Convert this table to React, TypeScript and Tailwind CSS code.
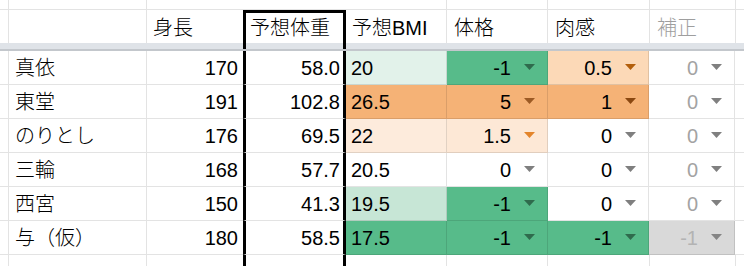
type Chip = { v: string; bg: string; text: string; arrow: string };

type Row = {
  name: string;
  height: string;
  weight: string;
  bmi: string;
  bmiBg: string;
  body: Chip;
  meat: Chip;
  fix: Chip;
};

const white = (v: string): Chip => ({ v, bg: "bg-white", text: "text-black", arrow: "fill-[#7f7f7f]" });
const green = (v: string): Chip => ({ v, bg: "bg-[#57bb8a]", text: "text-black", arrow: "fill-[#2f6b4d]" });
const grayFix = (v: string): Chip => ({ v, bg: "bg-white", text: "text-[#a3a3a3]", arrow: "fill-[#808080]" });

const rows: Row[] = [
  {
    name: "真依",
    height: "170",
    weight: "58.0",
    bmi: "20",
    bmiBg: "bg-[#e2f2ea]",
    body: green("-1"),
    meat: { v: "0.5", bg: "bg-[#fcd9b7]", text: "text-black", arrow: "fill-[#b35f0c]" },
    fix: grayFix("0"),
  },
  {
    name: "東堂",
    height: "191",
    weight: "102.8",
    bmi: "26.5",
    bmiBg: "bg-[#f5b276]",
    body: { v: "5", bg: "bg-[#f5b276]", text: "text-black", arrow: "fill-[#9c5a24]" },
    meat: { v: "1", bg: "bg-[#f5b276]", text: "text-black", arrow: "fill-[#8a4710]" },
    fix: grayFix("0"),
  },
  {
    name: "のりとし",
    height: "176",
    weight: "69.5",
    bmi: "22",
    bmiBg: "bg-[#fdebdc]",
    body: { v: "1.5", bg: "bg-[#fde8d6]", text: "text-black", arrow: "fill-[#e3852c]" },
    meat: white("0"),
    fix: grayFix("0"),
  },
  {
    name: "三輪",
    height: "168",
    weight: "57.7",
    bmi: "20.5",
    bmiBg: "bg-white",
    body: white("0"),
    meat: white("0"),
    fix: grayFix("0"),
  },
  {
    name: "西宮",
    height: "150",
    weight: "41.3",
    bmi: "19.5",
    bmiBg: "bg-[#c7e6d6]",
    body: green("-1"),
    meat: white("0"),
    fix: grayFix("0"),
  },
  {
    name: "与（仮）",
    height: "180",
    weight: "58.5",
    bmi: "17.5",
    bmiBg: "bg-[#57bb8a]",
    body: green("-1"),
    meat: green("-1"),
    fix: { v: "-1", bg: "bg-[#d9d9d9]", text: "text-[#b3b3b3]", arrow: "fill-[#858585]" },
  },
];

const grid = "border-r border-b border-black/[0.11]";
const thick = "border-x-[3px] border-x-black border-b border-b-black/[0.11]";

function Arrow({ className }: { className: string }) {
  return (
    <svg width="11" height="6" viewBox="0 0 11 6" className="ml-[13px] mb-[1px] shrink-0">
      <polygon points="0,0 11,0 5.5,6" className={className} />
    </svg>
  );
}

function ChipCell({ chip, width }: { chip: Chip; width: string }) {
  return (
    <div className={`${width} ${grid} ${chip.bg} flex items-center justify-end pr-[12px]`}>
      <span className={chip.text}>{chip.v}</span>
      <Arrow className={chip.arrow} />
    </div>
  );
}

export default function App() {
  return (
    <div className="w-[744px] h-[266px] overflow-hidden bg-white font-['Liberation_Sans','Noto_Sans_CJK_JP',sans-serif] font-light text-[20px] leading-[24px] text-black">
      {/* partial row above header */}
      <div className="flex h-[10px]">
        <div className={`w-[9px] ${grid}`} />
        <div className={`w-[138px] ${grid}`} />
        <div className="w-[96px] border-b border-black/[0.11]" />
        <div className="w-[103px] border-b border-black/[0.11]" />
        <div className={`w-[101px] ${grid}`} />
        <div className={`w-[101px] ${grid}`} />
        <div className={`w-[102px] ${grid}`} />
        <div className={`w-[86px] ${grid}`} />
        <div className="flex-1 border-b border-black/[0.11]" />
      </div>

      {/* header */}
      <div className="flex h-[33px]">
        <div className="w-[9px] border-r border-black/[0.11]" />
        <div className="w-[138px] border-r border-black/[0.11]" />
        <div className="w-[96px] flex items-center pl-[6px] pt-[2px]">身長</div>
        <div className="w-[103px] border-x-[3px] border-t-[3px] border-black flex items-center pl-[4px]">
          予想体重
        </div>
        <div className="w-[101px] border-r border-black/[0.11] flex items-center pl-[6px] pt-[2px]">予想BMI</div>
        <div className="w-[101px] border-r border-black/[0.11] flex items-center pl-[7px] pt-[2px]">体格</div>
        <div className="w-[102px] border-r border-black/[0.11] flex items-center pl-[7px] pt-[2px]">肉感</div>
        <div className="w-[86px] border-r border-black/[0.11] flex items-center pl-[7px] pt-[2px] text-[#9e9e9e]">
          補正
        </div>
        <div className="flex-1" />
      </div>

      {/* frozen row divider */}
      <div className="flex h-[8px] bg-[#dfe3e8] border-b-2 border-[#c3c7cc]">
        <div className="w-[243px]" />
        <div className="w-[103px] border-x-[3px] border-black" />
        <div className="flex-1" />
      </div>

      {rows.map((r) => (
        <div key={r.name} className="flex h-[34px]">
          <div className={`w-[9px] ${grid}`} />
          <div className={`w-[138px] ${grid} flex items-center pl-[6px]`}>{r.name}</div>
          <div className="w-[96px] border-b border-black/[0.11] flex items-center justify-end pr-[5px]">
            {r.height}
          </div>
          <div className={`w-[103px] ${thick} flex items-center justify-end pr-[3px]`}>{r.weight}</div>
          <div className={`w-[101px] ${grid} ${r.bmiBg} flex items-center pl-[5px]`}>{r.bmi}</div>
          <ChipCell chip={r.body} width="w-[101px]" />
          <ChipCell chip={r.meat} width="w-[101px]" />
          <ChipCell chip={r.fix} width="w-[86px]" />
          <div className="flex-1 border-b border-black/[0.11]" />
        </div>
      ))}

      {/* partial row below */}
      <div className="flex h-[20px]">
        <div className="w-[9px] border-r border-black/[0.11]" />
        <div className="w-[138px] border-r border-black/[0.11]" />
        <div className="w-[96px]" />
        <div className="w-[103px] border-x-[3px] border-black" />
        <div className="w-[101px] border-r border-black/[0.11]" />
        <div className="w-[101px] border-r border-black/[0.11]" />
        <div className="w-[102px] border-r border-black/[0.11]" />
        <div className="w-[86px] border-r border-black/[0.11]" />
        <div className="flex-1" />
      </div>
    </div>
  );
}
